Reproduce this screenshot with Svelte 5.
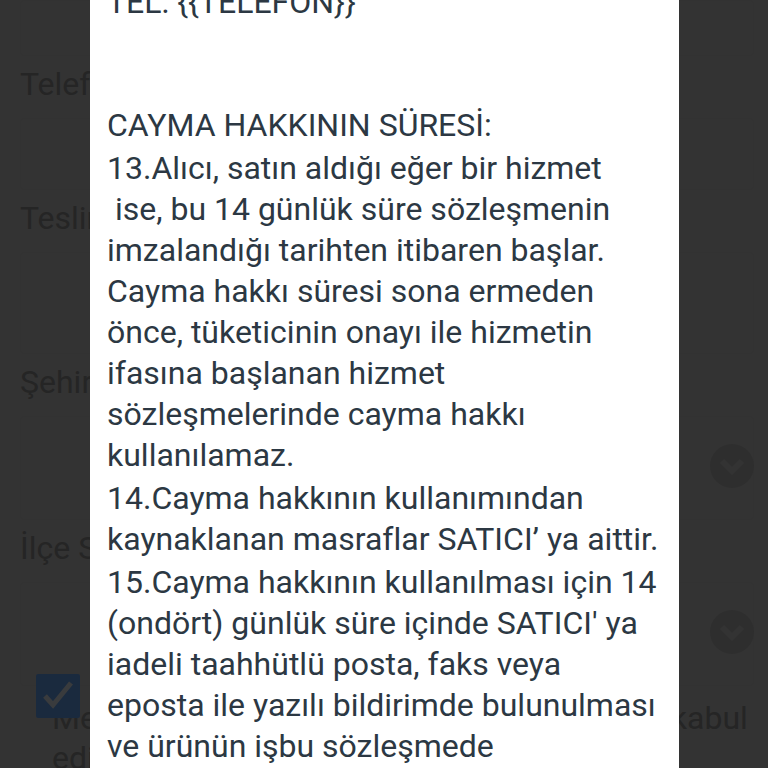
<script>
  let accepted = $state(true);

  const fields = [
    { id: "ad", label: "Ad Soyad", kind: "text" },
    { id: "telefon", label: "Telefon", kind: "text" },
    { id: "adres", label: "Teslimat Adresi", kind: "area" },
    { id: "sehir", label: "Şehir", kind: "select" },
    { id: "ilce", label: "İlçe Seçiniz", kind: "select" },
  ];

  // Sözleşme metni: her madde kendi satırlarıyla
  const clauses = [
    ["CAYMA HAKKININ SÜRESİ:"],
    [
      "13.Alıcı, satın aldığı eğer bir hizmet",
      " ise, bu 14 günlük süre sözleşmenin",
      "imzalandığı tarihten itibaren başlar.",
      "Cayma hakkı süresi sona ermeden",
      "önce, tüketicinin onayı ile hizmetin",
      "ifasına başlanan hizmet",
      "sözleşmelerinde cayma hakkı",
      "kullanılamaz.",
    ],
    ["14.Cayma hakkının kullanımından", "kaynaklanan masraflar SATICI’ ya aittir."],
    [
      "15.Cayma hakkının kullanılması için 14",
      "(ondört) günlük süre içinde SATICI' ya",
      "iadeli taahhütlü posta, faks veya",
      "eposta ile yazılı bildirimde bulunulması",
      "ve ürünün işbu sözleşmede",
    ],
  ];
</script>

<div class="screen">
  <form class="order">
    {#each fields as field, i}
      <div class="field">
        {#if i > 0}<label for={field.id}>{field.label}</label>{/if}
        {#if field.kind === "text"}
          <input id={field.id} type="text" aria-label={field.label} />
        {:else if field.kind === "area"}
          <textarea id={field.id}></textarea>
        {:else}
          <div class="select">
            <select id={field.id}><option value=""></option></select>
            <svg class="chevron" viewBox="0 0 44 44" aria-hidden="true">
              <circle cx="22" cy="22" r="22" />
              <path d="M12 17l10 10 10-10" />
            </svg>
          </div>
        {/if}
      </div>
    {/each}
    <label class="accept">
      <input type="checkbox" bind:checked={accepted} />
      <svg class="box" class:on={accepted} viewBox="0 0 44 44" aria-hidden="true">
        <rect width="44" height="44" rx="2" />
        <path d="M9 22l8 9 18-22" />
      </svg>
      <span>Mesafeli satış sözleşmesini okudum içeriği kabul ediyorum</span>
    </label>
  </form>

  <div class="backdrop">
    <div class="dialog" role="dialog" aria-label="Mesafeli satış sözleşmesi">
      <p class="seller">TEL: {"{{TELEFON}}"}</p>
      {#each clauses as lines}
        <p>{lines.join("\n")}</p>
      {/each}
    </div>
  </div>
</div>

<style>
  :global(body) {
    margin: 0;
    background: #808080;
  }
  .screen {
    position: relative;
    height: 100vh;
    overflow: hidden;
    font-family: Roboto, "Noto Sans", sans-serif;
    font-variant-ligatures: none;
  }
  .order {
    padding: 0 14px 0 20px;
    color: #5c5c5c;
    font-size: 32px;
    line-height: 40px;
  }
  .field {
    display: flex;
    flex-direction: column;
    gap: 14px;
    padding-bottom: 8px;
  }
  .field input,
  textarea,
  select {
    box-sizing: border-box;
    width: 100%;
    height: 72px;
    margin: 0;
    padding: 0 16px;
    border: 1px solid #7d7d7d;
    border-radius: 4px;
    background: #808080;
    font: inherit;
    color: inherit;
    resize: none;
    appearance: none;
  }
  .field:first-child input {
    height: 56px;
  }
  textarea {
    height: 102px;
    display: block;
  }
  select {
    height: 104px;
    display: block;
  }
  .select {
    position: relative;
  }
  .chevron {
    position: absolute;
    top: 50%;
    right: 0;
    width: 44px;
    height: 44px;
    margin-top: -24px;
    pointer-events: none;
  }
  .chevron circle {
    fill: #737373;
  }
  .chevron path {
    fill: none;
    stroke: #808080;
    stroke-width: 6;
  }
  .accept {
    position: relative;
    display: block;
    padding: 4px 0 0 32px;
  }
  .accept input {
    position: absolute;
    top: -20px;
    left: 16px;
    width: 44px;
    height: 44px;
    margin: 0;
    opacity: 0;
  }
  .box {
    position: absolute;
    top: -20px;
    left: 16px;
    width: 44px;
    height: 44px;
    pointer-events: none;
  }
  .box rect {
    fill: #7c7c7c;
  }
  .box.on rect {
    fill: #42699c;
  }
  .box path {
    fill: none;
    stroke: none;
    stroke-width: 5;
  }
  .box.on path {
    stroke: #909498;
  }
  .backdrop {
    position: absolute;
    inset: 0;
    display: flex;
    background: rgba(0, 0, 0, 0.6);
  }
  .dialog {
    display: flex;
    flex-direction: column;
    justify-content: flex-end;
    gap: 2px;
    flex: 1;
    margin: 0 89px 0 90px;
    padding: 0 0 1px 17px;
    overflow: hidden;
    background: #fff;
    color: #2c3843;
    font-size: 32px;
    line-height: 41px;
  }
  .dialog p {
    margin: 0;
    white-space: pre;
  }
  .dialog .seller {
    padding-bottom: 80px;
  }
</style>
